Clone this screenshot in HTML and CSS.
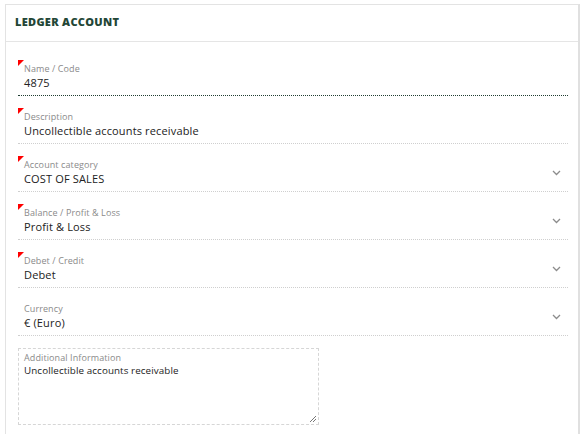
FILE: index.html
```html
<!DOCTYPE html>
<html>
<head>
<meta charset="utf-8">
<link rel="stylesheet" href="styles.css">
</head>
<body>
<div class="card">
  <div class="card-header">LEDGER ACCOUNT</div>
  <div class="card-body">
    <div class="field required focused">
      <div class="label">Name / Code</div>
      <div class="value">4875</div>
    </div>
    <div class="field required">
      <div class="label">Description</div>
      <div class="value">Uncollectible accounts receivable</div>
    </div>
    <div class="field required select">
      <div class="label">Account category</div>
      <div class="value">COST OF SALES</div>
      <svg class="chev" width="9" height="6" viewBox="0 0 9 6"><path d="M1 1 L4.5 4.5 L8 1" fill="none" stroke="#8c8c8c" stroke-width="1.3"/></svg>
    </div>
    <div class="field required select">
      <div class="label">Balance / Profit &amp; Loss</div>
      <div class="value">Profit &amp; Loss</div>
      <svg class="chev" width="9" height="6" viewBox="0 0 9 6"><path d="M1 1 L4.5 4.5 L8 1" fill="none" stroke="#8c8c8c" stroke-width="1.3"/></svg>
    </div>
    <div class="field required select">
      <div class="label">Debet / Credit</div>
      <div class="value">Debet</div>
      <svg class="chev" width="9" height="6" viewBox="0 0 9 6"><path d="M1 1 L4.5 4.5 L8 1" fill="none" stroke="#8c8c8c" stroke-width="1.3"/></svg>
    </div>
    <div class="field select">
      <div class="label">Currency</div>
      <div class="value">€ (Euro)</div>
      <svg class="chev" width="9" height="6" viewBox="0 0 9 6"><path d="M1 1 L4.5 4.5 L8 1" fill="none" stroke="#8c8c8c" stroke-width="1.3"/></svg>
    </div>
    <div class="textarea">
      <div class="label">Additional Information</div>
      <div class="value small">Uncollectible accounts receivable</div>
      <svg class="grip" width="8" height="8" viewBox="0 0 8 8"><path d="M7 1 L1 7 M7 4 L4 7" stroke="#777" stroke-width="1"/></svg>
    </div>
  </div>
</div>
</body>
</html>
```
FILE: styles.css
```css
html, body {
  margin: 0;
  padding: 0;
  background: #fff;
}
body {
  font-family: "Open Sans", "Liberation Sans", sans-serif;
  color: #222;
  padding: 4px 0 0 5px;
  height: 434px;
  overflow: hidden;
  box-sizing: border-box;
}
.card {
  width: 575px;
  box-sizing: border-box;
  border: 1px solid #e3e3e3;
  border-right: 2px solid #e0e0e0;
  border-bottom: none;
  height: 440px;
}
.card-header {
  height: 37px;
  border-bottom: 1px solid #e5e5e5;
  padding: 0 0 3px 9px;
  box-sizing: border-box;
  display: flex;
  align-items: center;
  font-size: 11px;
  font-weight: 800;
  color: #234636;
  letter-spacing: 0.3px;
}
.card-body {
  padding: 18px 10px 0 12px;
  display: flex;
  flex-direction: column;
  gap: 12px;
}
.field {
  position: relative;
  height: 36px;
  box-sizing: border-box;
  border-bottom: 1px dotted #cfcfcf;
  padding: 3px 0 0 6px;
}
.field.focused {
  border-bottom: 1px dotted #1f3d32;
}
.field.required::before {
  content: "";
  position: absolute;
  left: 0;
  top: 0;
  width: 0;
  height: 0;
  border-top: 6px solid #f00;
  border-right: 6px solid transparent;
}
.label {
  font-size: 9px;
  line-height: 12.3px;
  color: #8a8a8a;
  letter-spacing: 0.1px;
}
.value {
  font-size: 11px;
  line-height: 15px;
  color: #222;
  letter-spacing: 0.15px;
}
.chev {
  position: absolute;
  right: 7px;
  top: 14px;
}
.textarea {
  position: relative;
  width: 301px;
  height: 77px;
  box-sizing: border-box;
  border: 1px dashed #d6d6d6;
  padding: 3px 0 0 5px;
}
.value.small {
  font-size: 9.8px;
  line-height: 14px;
  letter-spacing: 0.1px;
}
.grip {
  position: absolute;
  right: 1px;
  bottom: 1px;
}
```
